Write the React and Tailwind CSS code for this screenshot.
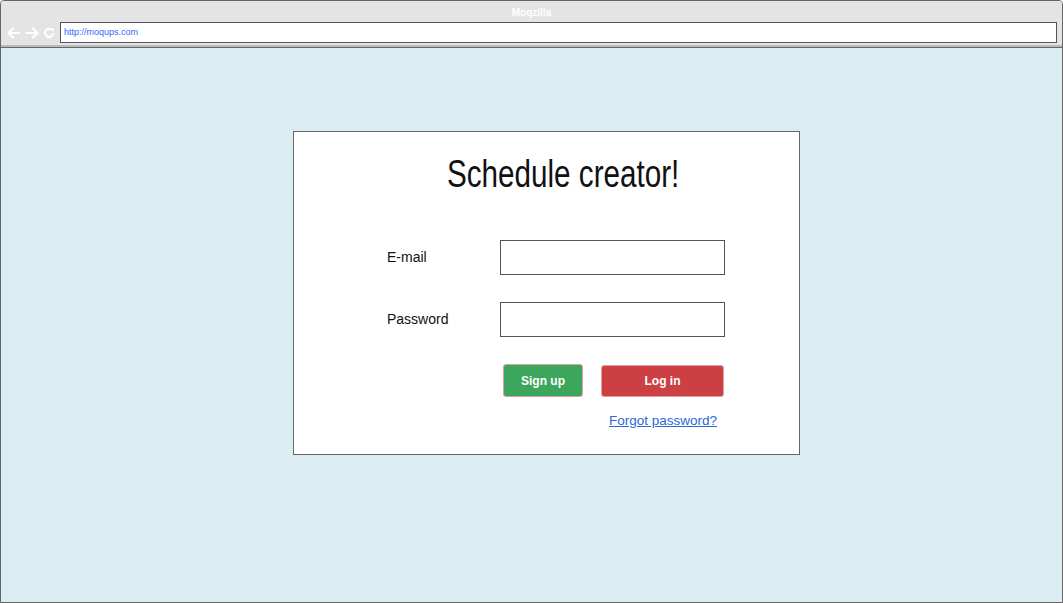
const Arrow = ({ flip }) => (
  <svg width="14" height="12" viewBox="0 0 14 12" className={flip ? 'rotate-180' : ''}>
    <path d="M1.5 6h11M6 1.5L1.5 6 6 10.5" fill="none" stroke="#fff" strokeWidth="2.2" strokeLinecap="round" strokeLinejoin="round" />
  </svg>
)

const Reload = () => (
  <svg width="12" height="12" viewBox="0 0 12 12">
    <path d="M10 6a4 4 0 1 1-1.2-2.9" fill="none" stroke="#fff" strokeWidth="2" />
    <path d="M7.5 1.5h3.5v3.5z" fill="#fff" />
  </svg>
)

const App = () => {
  return (
    <div className="w-[1063px] h-[603px] flex flex-col bg-[#dcecf3] border border-[#666] rounded-t-[4px] overflow-hidden font-['Liberation_Sans',Arial,sans-serif]">
      <div className="bg-[#e4e4e4] border-b-2 border-[#bbb]">
        <div className="h-[21px] pt-[1px] flex items-center justify-center text-[10px] font-bold text-white">Moqzilla</div>
        <div className="flex items-center h-[23px] pb-[2px]">
          <div className="w-[59px] flex items-center gap-[4px] pl-[6px]">
            <Arrow />
            <Arrow flip />
            <Reload />
          </div>
          <div className="flex-1 mr-[5px] h-[21px] bg-white border border-[#555] flex items-center pl-[3px] text-[9px] text-[#3366ff]">
            http://moqups.com
          </div>
        </div>
      </div>
      <div className="border-t border-[#666] flex-1 pt-[83px] pl-[292px]">
        <div className="w-[507px] h-[324px] bg-white border border-[#666] flex flex-col">
          <h1 className="mt-[22px] ml-[153px] text-[38px] leading-[40px] text-[#111] origin-left scale-x-[0.78] whitespace-nowrap">
            Schedule creator!
          </h1>
          <div className="mt-[46px] flex items-center h-[35px]">
            <span className="ml-[93px] w-[113px] text-[14px] text-[#111]">E-mail</span>
            <div className="w-[225px] h-[35px] border border-[#555]" />
          </div>
          <div className="mt-[27px] flex items-center h-[35px]">
            <span className="ml-[93px] w-[113px] text-[14px] text-[#111]">Password</span>
            <div className="w-[225px] h-[35px] border border-[#555]" />
          </div>
          <div className="mt-[27px] flex items-start">
            <button className="ml-[209px] w-[80px] h-[33px] bg-[#3ca65d] border border-[#e0a0a0] rounded-[3px] text-white text-[12px] font-bold">
              Sign up
            </button>
            <button className="ml-[18px] mt-[1px] w-[123px] h-[32px] bg-[#cc4043] border border-[#e0a0a0] rounded-[3px] text-white text-[12px] font-bold">
              Log in
            </button>
          </div>
          <a href="#" className="mt-[14px] ml-[315px] text-[13.5px] text-[#2868d8] underline">
            Forgot password?
          </a>
        </div>
      </div>
    </div>
  )
}

export default App
